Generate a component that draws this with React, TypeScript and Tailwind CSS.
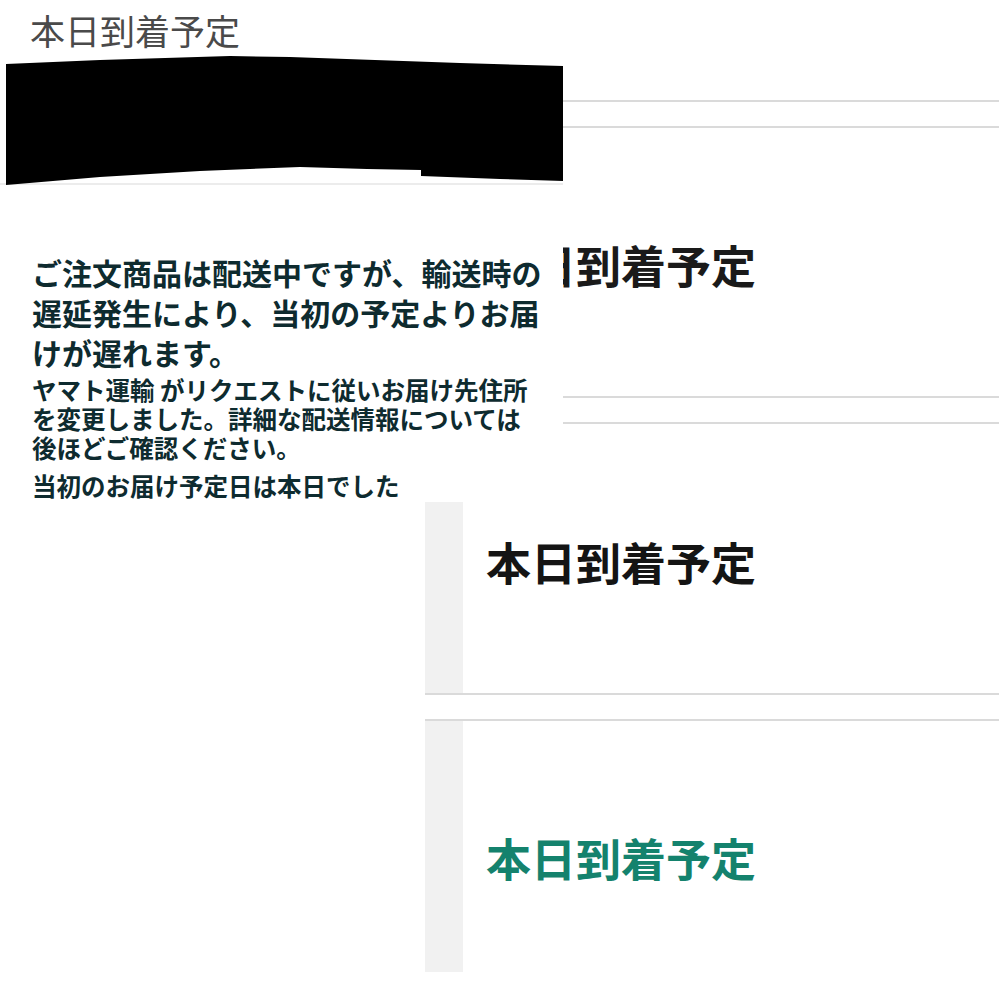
const jp = { fontFamily: '"Noto Sans CJK JP", "Noto Sans", sans-serif' };

function Rule() {
    return <div className="h-[2px] w-full bg-[#dadada]" />;
}

// Redaction blot over the address line
function Redaction() {
    return (
        <svg width="563" height="140" viewBox="0 50 563 140" className="block">
            <rect x="0" y="183" width="563" height="2" fill="#ececec" />
            <polygon
                points="6,64 100,60 230,56 290,57 460,63 563,66 563,181 500,179 421,176 421,170 367,169 300,167 200,171 100,177 6,185"
                fill="#000"
            />
        </svg>
    );
}

export default function App() {
    return (
        <div className="relative h-[999px] w-[999px] overflow-hidden bg-white" style={jp}>
            {/* Background screenshot: heading between rules */}
            <div className="absolute left-[425px] right-0 top-[100px] flex flex-col">
                <Rule />
                <div className="h-[24px]" />
                <Rule />
                <div className="flex h-[268px] items-center pl-[61px] pt-[6px]">
                    <span className="text-[45px] font-bold leading-[52px] text-[#1a1a1a]">本日到着予定</span>
                </div>
                <Rule />
                <div className="h-[24px]" />
                <Rule />
            </div>

            {/* Left pasted card */}
            <div className="absolute left-0 top-0 h-[500px] w-[563px] bg-white">
                <div className="pl-[30px] pt-[10px] text-[35px] leading-[40px] text-[#4a4a4a]">本日到着予定</div>
                <Redaction />
                <div className="pl-[32px] pt-[62px] font-bold text-[#0e2b2f]">
                    <p className="text-[30px] leading-[40px]">
                        ご注文商品は配送中ですが、輸送時の
                        <br />
                        遅延発生により、当初の予定よりお届
                        <br />
                        けが遅れます。
                    </p>
                    <p className="mt-[3px] text-[24.5px] leading-[29px]">
                        ヤマト運輸 がリクエストに従いお届け先住所
                        <br />
                        を変更しました。詳細な配送情報については
                        <br />
                        後ほどご確認ください。
                    </p>
                    <p className="mt-[9px] text-[24.5px] leading-[29px]">当初のお届け予定日は本日でした</p>
                </div>
            </div>

            {/* Lower pasted card */}
            <div className="absolute left-[425px] right-0 top-[502px] flex flex-col">
                <div className="flex h-[191px]">
                    <div className="w-[38px] bg-[#f1f1f1]" />
                    <div className="pl-[23px] pt-[34px] text-[45px] font-bold leading-[52px] text-[#141414]">本日到着予定</div>
                </div>
                <Rule />
                <div className="h-[24px]" />
                <Rule />
                <div className="flex h-[251px]">
                    <div className="w-[38px] bg-[#f1f1f1]" />
                    <div className="pl-[23px] pt-[111px] text-[45px] font-bold leading-[52px] text-[#14826d]">本日到着予定</div>
                </div>
            </div>
        </div>
    );
}
